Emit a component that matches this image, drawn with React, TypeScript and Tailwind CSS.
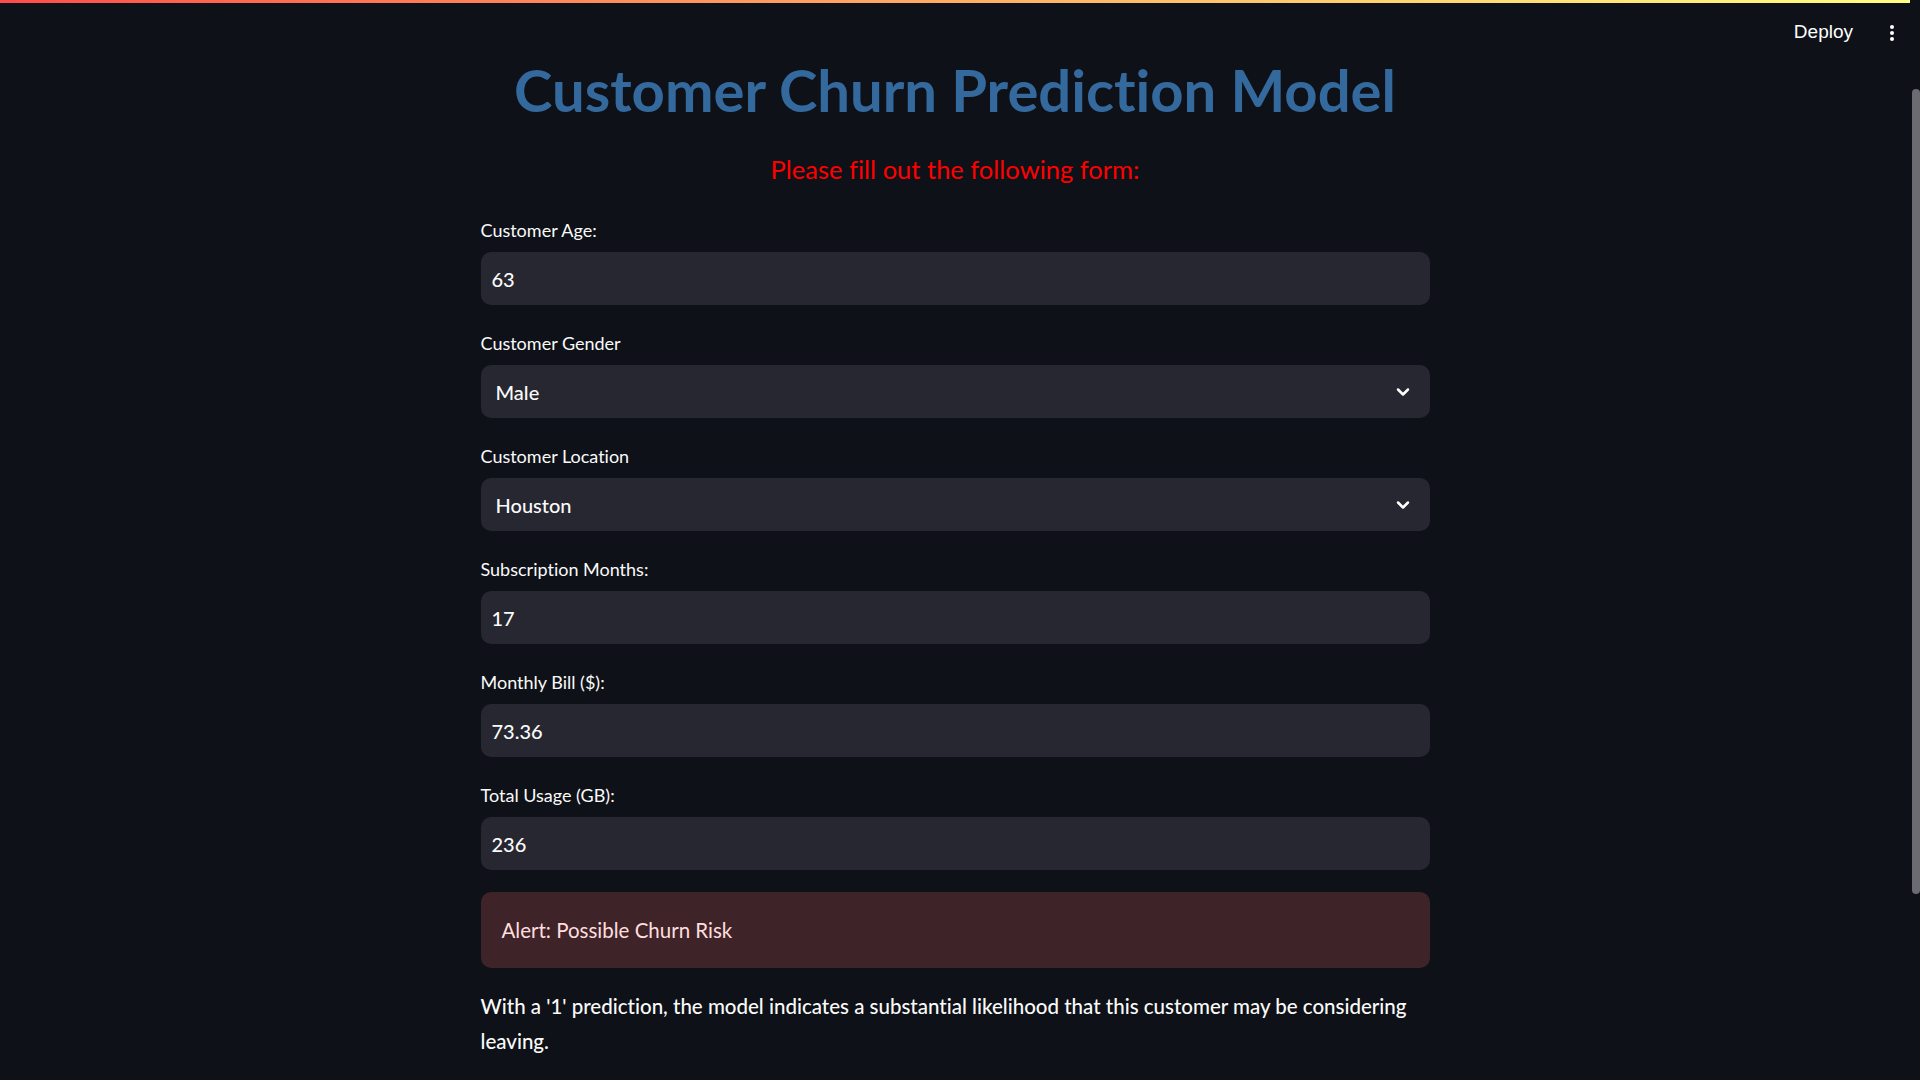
import { ChevronDown } from "lucide-react";

const font = { fontFamily: "Lato, 'Noto Sans', sans-serif" };

interface FieldProps {
  label: string;
  value: string;
  select?: boolean;
}

const Field = ({ label, value, select }: FieldProps) => {
  return (
    <div className="flex flex-col">
      <label className="h-[30px] flex items-center text-[18px] text-[#fafafa]">
        {label}
      </label>
      <div className="mt-[7px] h-[53px] rounded-[10px] bg-[#262730] flex items-center justify-between">
        {select ? (
          <>
            <span className="pl-[15px] text-[20px] font-medium text-[#fafafa]">
              {value}
            </span>
            <ChevronDown size={20} strokeWidth={3} className="mr-[17px] text-white" />
          </>
        ) : (
          <span className="pl-[11px] text-[20px] font-medium text-[#fafafa]">
            {value}
          </span>
        )}
      </div>
    </div>
  );
};

export default function App() {
  return (
    <div className="min-h-[1080px] w-full bg-[#0e1117] flex [font-variant-ligatures:none]" style={font}>
      <div className="flex-1 flex flex-col">
        <div className="h-[3px] w-full bg-gradient-to-r from-[#ff4b4b] to-[#ffff80]" />
        <header className="h-[51px] flex items-start justify-end pr-[16px]">
          <div className="mt-[18px] h-[22px] flex items-center gap-[37px]">
            <span
              className="text-[19px] text-white"
              style={{ fontFamily: "'Liberation Sans', Arial, sans-serif" }}
            >
              Deploy
            </span>
            <div className="flex flex-col gap-[2px] pt-[1px]">
              <span className="w-[4px] h-[4px] rounded-full bg-white" />
              <span className="w-[4px] h-[4px] rounded-full bg-white" />
              <span className="w-[4px] h-[4px] rounded-full bg-white" />
            </div>
          </div>
        </header>

        <main className="w-[949px] mx-auto flex flex-col">
          <h1 className="h-[70px] flex items-center justify-center text-[58px] font-bold text-[#34699e]">
            Customer Churn Prediction Model
          </h1>
          <p className="mt-[26px] h-[39px] flex items-center justify-center text-[25.5px] text-[#ff0000]">
            Please fill out the following form:
          </p>

          <div className="mt-[26px] flex flex-col gap-[23px]">
            <Field label="Customer Age:" value="63" />
            <Field label="Customer Gender" value="Male" select />
            <Field label="Customer Location" value="Houston" select />
            <Field label="Subscription Months:" value="17" />
            <Field label="Monthly Bill ($):" value="73.36" />
            <Field label="Total Usage (GB):" value="236" />
          </div>

          <div className="mt-[22px] h-[76px] rounded-[10px] bg-[#3e2428] flex items-center px-[21px]">
            <span className="text-[20.5px] text-[#ffdede]">Alert: Possible Churn Risk</span>
          </div>

          <p className="mt-[21px] text-[20.5px] leading-[35px] font-medium text-[#fafafa]">
            With a '1' prediction, the model indicates a substantial likelihood that this customer may be considering leaving.
          </p>
        </main>
      </div>
      <div className="w-[10px] flex flex-col pt-[89px]">
        <div className="w-[8px] ml-[2px] h-[805px] rounded-full bg-[#6b6c72]" />
      </div>
    </div>
  );
}
